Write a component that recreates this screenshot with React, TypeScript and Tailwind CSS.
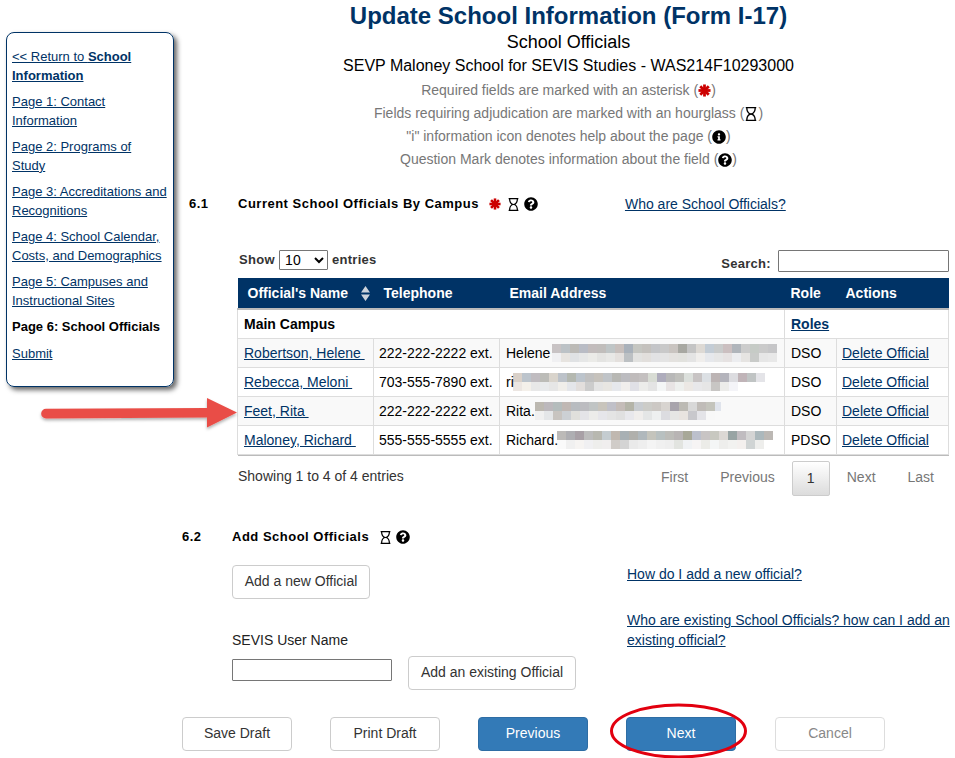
import { FaInfoCircle, FaQuestionCircle, FaRegHourglass } from "react-icons/fa";

const navLinks = [
  "Page 1: Contact Information",
  "Page 2: Programs of Study",
  "Page 3: Accreditations and Recognitions",
  "Page 4: School Calendar, Costs, and Demographics",
  "Page 5: Campuses and Instructional Sites",
];

// pixelated email smudges, top and bottom row of 9px blocks
const rows = [
  {
    name: "Robertson, Helene ",
    phone: "222-222-2222 ext.",
    email: "Helene",
    role: "DSO",
    top: "c8c3c4 bcc2c6 bcbab6 b9bcc5 c2bcbc c0bdbb bfc5c6 c7bfbc a9b1ba c5c6c1 c4c1bd c4c5c8 c9c9c9 c9c4c0 a8a8a2 c4c4c4 ddd9d4 c3ccd5 c9cbcb cbbfc0 b0b5bb cccccc c6cbc6 cacaca c6c6c8",
    bottom: "f0f0f2 e7e4e0 e0e2e4 e6e7e7 ebebe8 e4e4e2 e8e8e6 e4e0dd bcc0c3 e2e2e0 e2dfdc e2e2e4 e4e4e4 e4e2df e2e2de e4e4e4 f0eeec e6e8ec e6e6e6 e6e2e2 ecedf0 e6e4e2 c9cbc9 e6e6e6 e8e8e8",
    gap: "ml-[2px]",
  },
  {
    name: "Rebecca, Meloni ",
    phone: "703-555-7890 ext.",
    email: "ri",
    role: "DSO",
    top: "d9d0c8 bcc4cc c0bcc0 bcbcb8 d9d4cc bcc2c9 b4b8b0 bcc4cc c0c0c0 c6c2bc c0c4c8 b8b8b4 bcbcc0 c0bcbc c4c0c0 d8dcd4 aeacbc b8b8b8 c0c0bc dce0dc c8c4c4 dce0e4 bcb4b4 b4b4bc dcdce0 c0b4b8 c0c4c4 e4e4e8",
    bottom: "ece6e2 f4f0ea e8e8e8 e8eaec e6e6e6 f0eeea e4e6ea e2dedc cccccc e4e4e4 e8e6e2 e6e8ec f0eeec e0e0e6 ececea e4e4e4 f4f6f6 e8e4e4 eef0ee ece8e4 e8e8ea e6e6e6 c8c6c4 ececea f4f4f8 ffffff ffffff ffffff",
    gap: "ml-[-1px]",
  },
  {
    name: "Feet, Rita ",
    phone: "222-222-2222 ext.",
    email: "Rita.",
    role: "DSO",
    top: "bcb8b0 bcb8bc b4bcbc c0b8b4 b8bcc0 bcbcc0 c0c4c4 c8c4bc c0c0c8 c4bcb8 b4b4a8 c8ccd0 ccccc8 ccc8c4 d8d4d0 a8a4ac bcbab4 d8d8d8 c0bcb8 c4c4bc e0e4ec",
    bottom: "f0f0f0 e4e6e8 c8c4c0 ccd0d4 e0e0dc e4e4e8 ececea e6e6ea e4e4e4 e0e0e0 e8e8ec f0eeec e4e6e6 eef0f0 dcdce0 e6e6e4 e8e4e0 c8c8cc e4e4e8 f8f8f8 f9f9f9",
    gap: "ml-0",
    width: 186,
  },
  {
    name: "Maloney, Richard ",
    phone: "555-555-5555 ext.",
    email: "Richard.",
    role: "PDSO",
    top: "bcbab8 aeaeb2 a8a0a6 bcbcbc b8b8b0 c4ccd0 c0b8b0 a8b0b4 b0b0ac b0b8bc c4c4bc b8c0c0 bcbcb8 b8b4b4 a8a898 bcc0cc c8c4c4 c8c8c0 dcd8d4 98a4a4 c0bcc0 d4d4d4 acb8bc bcb8b4",
    bottom: "fafafa f0f0f0 f6f4f2 f0f0f2 eeeeec f0eeee d0ccc8 d4d4d4 eaeaea eeeeee f4f4f4 f0f0f0 eeeeee e2e4e0 f0f2f4 f6f4f4 ecece8 f4f6f6 eeeeec f2f2f0 f4f0ee d0d4d4 eeeeec ffffff",
    gap: "ml-[-1px]",
  },
];

function Smudge({ top, bottom, width }: { top: string; bottom: string; width?: number }) {
  const t = top.split(" ");
  const b = bottom.split(" ");
  return (
    <svg width={width ?? t.length * 9} height={18} className="block shrink-0">
      {t.map((c, i) => <rect key={i} x={i * 9} y={0} width={9} height={9} fill={"#" + c} />)}
      {b.map((c, i) => <rect key={i} x={i * 9} y={9} width={9} height={9} fill={"#" + c} />)}
    </svg>
  );
}

function Asterisk({ className }: { className?: string }) {
  return (
    <svg viewBox="0 0 14 14" className={className}>
      <g stroke="#cc0000" strokeWidth="3">
        <path d="M7 0.5V13.5" />
        <path d="M0.5 7H13.5" />
        <path d="M2.4 2.4L11.6 11.6" />
        <path d="M11.6 2.4L2.4 11.6" />
      </g>
    </svg>
  );
}

function Btn({ children, className }: { children: string; className: string }) {
  return (
    <button className={"h-[34px] pb-[2px] rounded border text-[14px] leading-none " + className}>
      {children}
    </button>
  );
}

export default function App() {
  return (
    <div className="flex w-[955px] h-[758px] overflow-hidden bg-white relative font-['Liberation_Sans',Arial,sans-serif] text-[14px] text-black">
      {/* Left nav */}
      <div className="w-[182px] shrink-0 pl-[6px] pt-[32px]">
        <div className="w-[168px] h-[355px] rounded-lg border-[1.5px] border-[#003366] shadow-[3px_3px_5px_#666] px-[5px] pt-[15px] flex flex-col gap-[8px] text-[13px] leading-[18.5px] text-[#003366]">
          <a className="underline">&lt;&lt; Return to <b>School Information</b></a>
          {navLinks.map((l) => (
            <a key={l} className="underline">{l}</a>
          ))}
          <b className="text-black">Page 6: School Officials</b>
          <a className="underline">Submit</a>
        </div>
      </div>

      {/* Main column */}
      <div className="flex-1 flex flex-col">
        <div className="text-center">
          <h1 className="text-[24px] leading-[32px] font-bold text-[#003366]">Update School Information (Form I-17)</h1>
          <div className="text-[18px] leading-[20px]">School Officials</div>
          <div className="text-[16px] leading-[20px] mt-[4px]">SEVP Maloney School for SEVIS Studies - WAS214F10293000</div>
          <div className="text-[#777] leading-[23px] mt-[3px]">
            <div className="flex justify-center items-center">Required fields are marked with an asterisk (<Asterisk className="w-[13px] h-[13px]" />)</div>
            <div className="flex justify-center items-center">Fields requiring adjudication are marked with an hourglass (<FaRegHourglass className="text-black text-[14px]" />)</div>
            <div className="flex justify-center items-center">"i" information icon denotes help about the page (<FaInfoCircle className="text-black text-[14px]" />)</div>
            <div className="flex justify-center items-center">Question Mark denotes information about the field (<FaQuestionCircle className="text-black text-[14px]" />)</div>
          </div>
        </div>

        {/* 6.1 */}
        <div className="flex items-center mt-[24px] pl-[7px] h-[18px] font-bold text-[13px] tracking-[0.5px]">
          <span className="w-[49px]">6.1</span>
          <span>Current School Officials By Campus</span>
          <Asterisk className="w-[12px] h-[12px] ml-[10px]" />
          <FaRegHourglass className="ml-[6px] text-[13px]" />
          <FaQuestionCircle className="ml-[4px] text-[14px]" />
          <a className="ml-[87px] font-normal text-[14px] tracking-normal text-[#003366] underline">Who are School Officials?</a>
        </div>

        <div className="ml-[56px] w-[711px] mt-[37px]">
          <div className="flex justify-between items-end h-[28px] font-bold text-[13px] tracking-[0.3px] text-[#333] pb-[6px]">
            <div className="flex items-center gap-[4px] relative top-[-2px] ml-[1px]">
              <span>Show</span>
              <select className="w-[49px] h-[20px] border border-[#767676] rounded-[1px] text-[14px] font-normal text-black bg-white pl-[1px]">
                <option>10</option>
              </select>
              <span>entries</span>
            </div>
            <div className="flex items-center gap-[7px]">
              <span className="relative top-[3px]">Search:</span>
              <input className="w-[171px] h-[22px] border border-[#767676] rounded-[1px]" />
            </div>
          </div>
          <table className="w-[711px] -ml-[1px] table-fixed border-collapse">
            <colgroup>
              <col className="w-[136px]" />
              <col className="w-[126px]" />
              <col className="w-[285px]" />
              <col className="w-[52px]" />
              <col className="w-[112px]" />
            </colgroup>
            <thead>
              <tr className="h-[31px] bg-[#003366] text-white text-left text-[14px] border-b-[2px] border-[#bbb]">
                <th className="pl-[10px] font-bold">
                  <span className="flex items-center justify-between pr-[4px]">
                    Official's Name
                    <svg width="9" height="15" viewBox="0 0 9 15"><path d="M4.5 0L9 6.5H0Z M4.5 15L9 8.5H0Z" fill="#ccd3db" /></svg>
                  </span>
                </th>
                <th className="pl-[10px] font-bold">Telephone</th>
                <th className="pl-[10px] font-bold">Email Address</th>
                <th className="pl-[6px] font-bold">Role</th>
                <th className="pl-[9px] font-bold">Actions</th>
              </tr>
            </thead>
            <tbody>
              <tr className="h-[29px] border border-[#ddd]">
                <td colSpan={3} className="pl-[6px] pt-[2px] font-bold border-r border-[#ddd]">Main Campus</td>
                <td colSpan={2} className="pl-[6px] pt-[2px] font-bold text-[#003366] underline">Roles</td>
              </tr>
              {rows.map((r, i) => (
                <tr key={r.name} className={"h-[29px] " + (i % 2 === 0 ? "bg-[#f9f9f9]" : "bg-white")}>
                  <td className="pl-[6px] pt-[2px] border border-[#ddd] text-[#003366] underline whitespace-pre">{r.name}</td>
                  <td className="pl-[5px] pt-[2px] border border-[#ddd]">{r.phone}</td>
                  <td className="pl-[6px] border border-[#ddd]">
                    <span className="flex items-center">
                      <span className="relative top-[1px]">{r.email}</span>
                      <span className={r.gap}><Smudge top={r.top} bottom={r.bottom} width={r.width} /></span>
                    </span>
                  </td>
                  <td className="pl-[6px] pt-[2px] border border-[#ddd]">{r.role}</td>
                  <td className="pl-[5px] pt-[2px] border border-[#ddd] text-[#003366] underline">Delete Official</td>
                </tr>
              ))}
            </tbody>
            <tfoot>
              <tr><td colSpan={5} className="h-[2px] bg-[#bbb] p-0"></td></tr>
            </tfoot>
          </table>
          <div className="flex justify-between items-start text-[#333] mt-[5px]">
            <span className="mt-[5px] leading-[20px]">Showing 1 to 4 of 4 entries</span>
            <div className="flex items-center text-[#777] pr-[15px]">
              <span className="mr-[32px] relative top-[-1px]">First</span>
              <span className="mr-[17px] relative top-[-1px]">Previous</span>
              <span className="w-[38px] h-[35px] flex items-center justify-center border border-[#ccc] rounded-[2px] bg-linear-to-b from-white to-[#dcdcdc] text-[#333] mr-[17px]">1</span>
              <span className="mr-[32px] relative top-[-1px]">Next</span>
              <span className="relative top-[-1px]">Last</span>
            </div>
          </div>
        </div>

        {/* 6.2 */}
        <div className="flex items-center mt-[32px] h-[18px] font-bold text-[13px] tracking-[0.5px]">
          <span className="w-[50px]">6.2</span>
          <span>Add School Officials</span>
          <FaRegHourglass className="ml-[10px] text-[13px]" />
          <FaQuestionCircle className="ml-[4px] text-[14px]" />
        </div>

        <div className="flex ml-[50px] mt-[19px] h-[125px]">
          <div className="w-[395px]">
            <Btn className="w-[138px] border-[#ccc] bg-white text-[#333]">Add a new Official</Btn>
            <div className="mt-[31px] leading-[20px] text-[#222]">SEVIS User Name</div>
            <div className="flex items-start gap-[16px] mt-[6px]">
              <input className="w-[160px] h-[22px] mt-[3px] border border-[#767676] rounded-[1px]" />
              <Btn className="w-[168px] border-[#ccc] bg-white text-[#333]">Add an existing Official</Btn>
            </div>
          </div>
          <div className="w-[326px] leading-[20px] text-[#003366] -mt-[1px]">
            <a className="underline block">How do I add a new official?</a>
            <a className="underline block mt-[26px]">Who are existing School Officials? how can I add an existing official?</a>
          </div>
        </div>

        <div className="flex gap-[38px] mt-[27px]">
          <Btn className="w-[110px] border-[#ccc] bg-white text-[#333]">Save Draft</Btn>
          <Btn className="w-[110px] border-[#ccc] bg-white text-[#333]">Print Draft</Btn>
          <Btn className="w-[110px] border-[#2e6da4] bg-[#337ab7] text-white">Previous</Btn>
          <Btn className="w-[110px] border-[#2e6da4] bg-[#337ab7] text-white">Next</Btn>
          <Btn className="w-[110px] ml-[1px] border-[#ddd] bg-white text-[#888]">Cancel</Btn>
        </div>
      </div>

      {/* Annotations drawn over the screenshot */}
      <svg className="absolute left-0 top-0 pointer-events-none" width="955" height="758">
        <defs>
          <filter id="arrowShadow" x="-10%" y="-30%" width="120%" height="170%">
            <feDropShadow dx="0" dy="2" stdDeviation="1.5" floodColor="#000" floodOpacity="0.3" />
          </filter>
        </defs>
        <path d="M46 408.8L207 408V398L237 412.5L207 427.5V417.5L46 418.5A4.8 4.8 0 0 1 46 408.8Z" fill="#e94e47" filter="url(#arrowShadow)" />
        <ellipse cx="678.5" cy="731" rx="67" ry="26" fill="none" stroke="#e2000f" strokeWidth="3" />
      </svg>
    </div>
  );
}
